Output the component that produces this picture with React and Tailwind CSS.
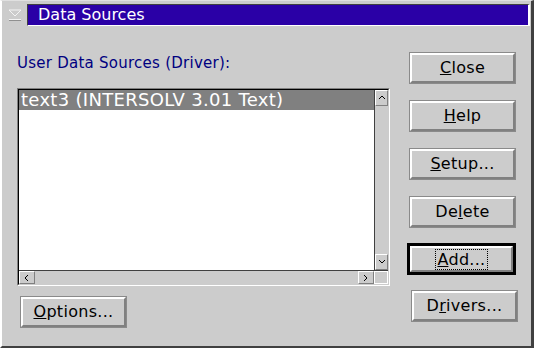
import React from "react";

const font = { fontFamily: '"DejaVu Sans", "Liberation Sans", sans-serif' };

const Btn = ({ children, isDefault, className = "" }) => (
  <div
    className={
      "h-[32px] w-[107px] " +
      (isDefault ? "border-[3px] border-black " : "border border-[#8a8a8a] ") +
      className
    }
  >
    <div className="flex h-full w-full items-center justify-center border-l-2 border-t-2 border-b-2 border-r-2 border-l-white border-t-white border-b-[#808080] border-r-[#808080] text-[16px] tracking-[0.3px] text-black">
      {isDefault ? <span className="border border-dotted border-black px-[1px] leading-[19px]">{children}</span> : children}
    </div>
  </div>
);

const Chevron = ({ dir }) => {
  const pts = {
    up: "1,5 4,2 7,5",
    down: "1,2 4,5 7,2",
    left: "5,1 2,4 5,7",
    right: "2,1 5,4 2,7",
  }[dir];
  return (
    <svg width="8" height="8" viewBox="0 0 8 8">
      <polyline points={pts} fill="none" stroke="#000" strokeWidth="1" />
    </svg>
  );
};

const ArrowBox = ({ dir, className = "" }) => (
  <div className={"flex items-center justify-center border border-l-white border-t-white border-r-[#808080] border-b-[#808080] bg-[#cccccc] " + className}>
    <Chevron dir={dir} />
  </div>
);

export default function App() {
  return (
    <div style={font} className="h-[348px] w-[534px] overflow-hidden bg-[#cccccc]">
      <div className="h-full w-full border-l-2 border-r-[3px] border-b-2 border-l-white border-r-[#404040] border-b-[#404040] border-t border-t-[#e0e0e0]">
        {/* title bar */}
        <div className="mt-[3px] flex h-[22px] items-stretch">
          <div className="flex w-[25px] items-center justify-center">
            <svg width="14" height="12" viewBox="0 0 14 12">
              <polyline points="1,1 13,1 7,7 1,1" fill="none" stroke="#f4f4f4" strokeWidth="1" />
              <line x1="1" y1="10.5" x2="13" y2="10.5" stroke="#f4f4f4" strokeWidth="1" />
              <line x1="1" y1="11.5" x2="13" y2="11.5" stroke="#909090" strokeWidth="1" />
            </svg>
          </div>
          <div className="mr-[1px] flex flex-1 items-center border-t border-l border-t-[#404040] border-l-[#404040] border-b border-r-2 border-b-white border-r-white bg-[#2a00a6] pl-[10px] text-[16px] text-white">
            Data Sources
          </div>
        </div>

        <div className="flex">
          {/* left column */}
          <div className="ml-[15px] w-[373px]">
            <div className="mt-[28px] text-[15px] leading-[18px] tracking-[0.25px] text-[#000080]">User Data Sources (Driver):</div>
            <div className="mt-[16px] h-[198px] border border-t-[#808080] border-l-[#808080] border-b-white border-r-white">
              <div className="flex h-full flex-col border border-t-black border-l-black border-b-[#cccccc] border-r-[#cccccc]">
                <div className="flex flex-1">
                  <div className="flex-1 bg-white">
                    <div className="h-[20px] bg-[#808080] pl-[2px] text-[18px] leading-[20px] tracking-[0.3px] text-white">
                      text3 (INTERSOLV 3.01 Text)
                    </div>
                  </div>
                  <div className="flex w-[14px] flex-col justify-between border-l border-l-[#404040] bg-[#cccccc]">
                    <ArrowBox dir="up" className="h-[16px] w-full" />
                    <ArrowBox dir="down" className="h-[16px] w-full" />
                  </div>
                </div>
                <div className="flex h-[14px] border-t border-t-[#404040]">
                  <div className="flex flex-1 justify-between bg-[#cccccc]">
                    <ArrowBox dir="left" className="h-full w-[16px]" />
                    <ArrowBox dir="right" className="h-full w-[16px]" />
                  </div>
                  <div className="w-[14px] border border-white bg-[#cccccc]"></div>
                </div>
              </div>
            </div>
            <Btn className="ml-[3px] mt-[10px]">
              <span><u>O</u>ptions...</span>
            </Btn>
          </div>

          {/* right column */}
          <div className="ml-[19px] mt-[26px] flex flex-col gap-[16px]">
            <Btn><span><u>C</u>lose</span></Btn>
            <Btn><span><u>H</u>elp</span></Btn>
            <Btn><span><u>S</u>etup...</span></Btn>
            <Btn><span>De<u>l</u>ete</span></Btn>
            <Btn isDefault className="-ml-[2px] -mt-[1px] w-[109px]"><span><u>A</u>dd...</span></Btn>
            <Btn className="ml-[2px] -mt-[1px]"><span>D<u>r</u>ivers...</span></Btn>
          </div>
        </div>
      </div>
    </div>
  );
}
